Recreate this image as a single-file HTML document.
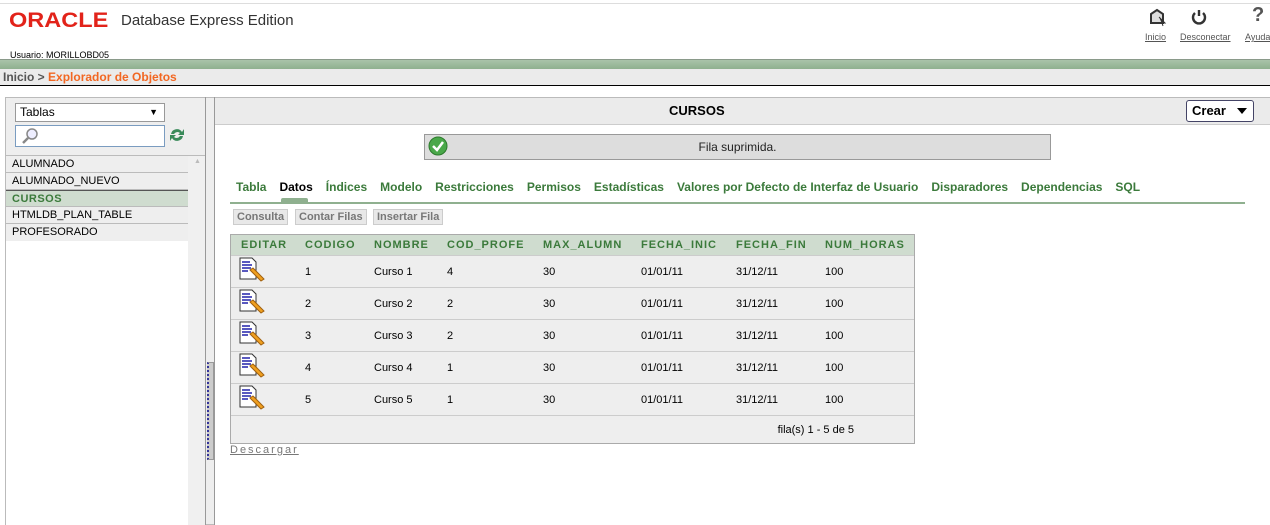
<!DOCTYPE html>
<html><head><meta charset="utf-8"><style>
*{margin:0;padding:0;box-sizing:border-box}
body{width:1270px;height:525px;overflow:hidden;background:#fff;font-family:"Liberation Sans",Arial,sans-serif;font-size:11px;color:#000;position:relative}
.a{position:absolute}
.tabs span{margin-right:13px;color:#3b7a3b;font-weight:bold;font-size:12px}
.btn{position:absolute;top:209px;height:16px;border:1px solid #ccc;background:#e8e8e8;color:#777;font-size:11px;padding:1px 3px;font-weight:bold}
table{border-collapse:collapse}
th{color:#3b7a3b;font-size:11px;letter-spacing:1px;text-align:left;font-weight:bold;height:20px;padding:0}
td{height:32px;border-top:1px solid #ccc;font-size:11px;padding:0;padding-top:1px}
.list div{height:17px;line-height:17px;padding-left:6px;border-bottom:1px solid #bbb;font-size:11px;background:#eee}
</style></head><body>
<div class="a" style="left:0;top:3px;width:1270px;height:1px;background:#ddd"></div>
<div class="a" style="left:9px;top:9px;font-size:21px;font-weight:bold;color:#e2231a;transform:scaleX(1.12);transform-origin:left">ORACLE</div>
<div class="a" style="left:121px;top:12px;font-size:15px;color:#333">Database Express Edition</div>
<div class="a" style="left:10px;top:50px;font-size:9px;color:#000">Usuario: MORILLOBD05</div>
<svg class="a" style="left:1148px;top:8px" width="20" height="20"><path d="M3 6 L9 2 L15 6 V15 H3 Z" fill="#ddd" stroke="#333" stroke-width="2"/><path d="M11 9 L17 15 L14 15 L15 18" fill="#333" stroke="#333"/></svg>
<svg class="a" style="left:1190px;top:8px" width="18" height="18"><path d="M5 5 A6 6 0 1 0 13 5" fill="none" stroke="#333" stroke-width="2.4"/><path d="M9 2 V8" stroke="#333" stroke-width="2.4"/></svg>
<div class="a" style="left:1252px;top:4px;font-size:20px;font-weight:bold;color:#555">?</div>
<div class="a" style="left:1145px;top:32px;font-size:9px;color:#555;text-decoration:underline">Inicio</div>
<div class="a" style="left:1180px;top:32px;font-size:9px;color:#555;text-decoration:underline">Desconectar</div>
<div class="a" style="left:1245px;top:32px;font-size:9px;color:#555;text-decoration:underline">Ayuda</div>
<div class="a" style="left:0;top:59px;width:1270px;height:1px;background:#8a9a8a"></div>
<div class="a" style="left:0;top:60px;width:1270px;height:9px;background:linear-gradient(#a9c3a9,#8fb08f)"></div>
<div class="a" style="left:0;top:69px;width:1270px;height:17px;background:#ebebeb;border-bottom:1px solid #000;font-size:12px;font-weight:bold;line-height:17px;padding-left:3px;color:#555">Inicio &gt; <span style="color:#f26722">Explorador de Objetos</span></div>
<div class="a" style="left:5px;top:97px;width:210px;height:428px;background:#eee;border:1px solid #bbb"></div>
<div class="a" style="left:15px;top:103px;width:150px;height:19px;background:#fff;border:1px solid #999;font-size:12px;line-height:17px;padding-left:4px">Tablas<span style="position:absolute;right:6px;font-size:9px">▼</span></div>
<div class="a" style="left:15px;top:125px;width:150px;height:22px;background:#fff;border:1px solid #7a9cc0"></div>
<svg class="a" style="left:20px;top:127px" width="20" height="18"><circle cx="12" cy="7" r="5" fill="#eef" stroke="#888" stroke-width="1.5"/><path d="M8 11 L3 16" stroke="#888" stroke-width="2.5"/></svg>
<svg class="a" style="left:168px;top:126px" width="18" height="18"><path d="M3 8 A6 6 0 0 1 14 6 L16 3 L16 9 L10 9 L12 7 A4 4 0 0 0 6 8Z" fill="#3a8a5a"/><path d="M15 10 A6 6 0 0 1 4 12 L2 15 L2 9 L8 9 L6 11 A4 4 0 0 0 12 10Z" fill="#3a8a5a"/></svg>
<div class="a" style="left:6px;top:155px;width:199px;height:370px;background:#fff;border-top:1px solid #bbb"></div>
<div class="a" style="left:188px;top:156px;width:17px;height:369px;background:#f0f0f0"></div>
<div class="a" style="left:194px;top:158px;font-size:7px;color:#bbb">▲</div>
<div class="a list" style="left:6px;top:156px;width:182px">
<div>ALUMNADO</div><div>ALUMNADO_NUEVO</div>
<div style="background:#cfdccf;color:#3b7a3b;font-weight:bold;letter-spacing:.5px;border-top:1px solid #555">CURSOS</div>
<div>HTMLDB_PLAN_TABLE</div><div style="border-bottom:none">PROFESORADO</div></div>
<div class="a" style="left:205px;top:97px;width:1px;height:428px;background:#999"></div>
<div class="a" style="left:214px;top:97px;width:1px;height:428px;background:#999"></div>
<div class="a" style="left:207px;top:362px;width:7px;height:98px;background:#ccc;border:1px solid #999;border-left:2px dotted #339"></div>
<div class="a" style="left:215px;top:97px;width:1055px;height:28px;background:#ebebeb;border-top:1px solid #bbb;border-bottom:1px solid #ccc;font-weight:bold;font-size:13px;line-height:25px"><span style="position:absolute;left:454px">CURSOS</span></div>
<div class="a" style="left:1186px;top:100px;width:68px;height:22px;background:#fff;border:1px solid #446;border-radius:3px;font-weight:bold;font-size:13px;line-height:20px;padding-left:5px">Crear<svg style="position:absolute;right:6px;top:7px" width="10" height="6"><path d="M0 0H10L5 6Z" fill="#000"/></svg></div>
<div class="a" style="left:424px;top:134px;width:627px;height:26px;background:#ddd;border:1px solid #999;text-align:center;font-size:12px;line-height:24px;color:#222">Fila suprimida.</div>
<svg class="a" style="left:428px;top:136px" width="20" height="20"><circle cx="10" cy="10" r="9" fill="#4aa84a" stroke="#2d7a2d"/><path d="M5 10 L9 14 L15 6" fill="none" stroke="#fff" stroke-width="2.5"/></svg>
<div class="a tabs" style="left:236px;top:180px;white-space:nowrap"><span>Tabla</span><span style="color:#000">Datos</span><span>Índices</span><span>Modelo</span><span>Restricciones</span><span>Permisos</span><span>Estadísticas</span><span>Valores por Defecto de Interfaz de Usuario</span><span>Disparadores</span><span>Dependencias</span><span>SQL</span></div>
<div class="a" style="left:281px;top:198px;width:27px;height:4px;background:#8fb08f;border-radius:2px 2px 0 0"></div>
<div class="a" style="left:230px;top:202px;width:1015px;height:2px;background:#8fb08f"></div>
<div class="btn" style="left:233px">Consulta</div>
<div class="btn" style="left:295px">Contar Filas</div>
<div class="btn" style="left:373px">Insertar Fila</div>
<div class="a" style="left:230px;top:234px;width:685px;height:210px;background:#eee;border:1px solid #aaa">
<table style="width:100%">
<tr style="background:#cfdccf"><th style="padding-left:10px;width:74px">EDITAR</th><th style="width:69px">CODIGO</th><th style="width:73px">NOMBRE</th><th style="width:96px">COD_PROFE</th><th style="width:98px">MAX_ALUMN</th><th style="width:95px">FECHA_INIC</th><th style="width:89px">FECHA_FIN</th><th>NUM_HORAS</th></tr>
<tr><td style="padding-left:8px"><svg width="26" height="26"><path d="M1 1H13L17 5V22H1Z" fill="#fff" stroke="#333"/><path d="M3 5H11M3 8H13M3 11H12M3 14H9" stroke="#22a" stroke-width="1.5"/><path d="M11 13L22 24L25 22L14 11Z" fill="#f0a020" stroke="#a06010"/></svg></td><td>1</td><td>Curso 1</td><td>4</td><td>30</td><td>01/01/11</td><td>31/12/11</td><td>100</td></tr>
<tr><td style="padding-left:8px"><svg width="26" height="26"><path d="M1 1H13L17 5V22H1Z" fill="#fff" stroke="#333"/><path d="M3 5H11M3 8H13M3 11H12M3 14H9" stroke="#22a" stroke-width="1.5"/><path d="M11 13L22 24L25 22L14 11Z" fill="#f0a020" stroke="#a06010"/></svg></td><td>2</td><td>Curso 2</td><td>2</td><td>30</td><td>01/01/11</td><td>31/12/11</td><td>100</td></tr>
<tr><td style="padding-left:8px"><svg width="26" height="26"><path d="M1 1H13L17 5V22H1Z" fill="#fff" stroke="#333"/><path d="M3 5H11M3 8H13M3 11H12M3 14H9" stroke="#22a" stroke-width="1.5"/><path d="M11 13L22 24L25 22L14 11Z" fill="#f0a020" stroke="#a06010"/></svg></td><td>3</td><td>Curso 3</td><td>2</td><td>30</td><td>01/01/11</td><td>31/12/11</td><td>100</td></tr>
<tr><td style="padding-left:8px"><svg width="26" height="26"><path d="M1 1H13L17 5V22H1Z" fill="#fff" stroke="#333"/><path d="M3 5H11M3 8H13M3 11H12M3 14H9" stroke="#22a" stroke-width="1.5"/><path d="M11 13L22 24L25 22L14 11Z" fill="#f0a020" stroke="#a06010"/></svg></td><td>4</td><td>Curso 4</td><td>1</td><td>30</td><td>01/01/11</td><td>31/12/11</td><td>100</td></tr>
<tr><td style="padding-left:8px"><svg width="26" height="26"><path d="M1 1H13L17 5V22H1Z" fill="#fff" stroke="#333"/><path d="M3 5H11M3 8H13M3 11H12M3 14H9" stroke="#22a" stroke-width="1.5"/><path d="M11 13L22 24L25 22L14 11Z" fill="#f0a020" stroke="#a06010"/></svg></td><td>5</td><td>Curso 5</td><td>1</td><td>30</td><td>01/01/11</td><td>31/12/11</td><td>100</td></tr>
<tr><td colspan="8" style="height:28px;text-align:right;padding-right:60px">fila(s) 1 - 5 de 5</td></tr>
</table></div>
<div class="a" style="left:230px;top:444px;font-size:11px;letter-spacing:2px;color:#777;text-decoration:underline">Descargar</div>
</body></html>
